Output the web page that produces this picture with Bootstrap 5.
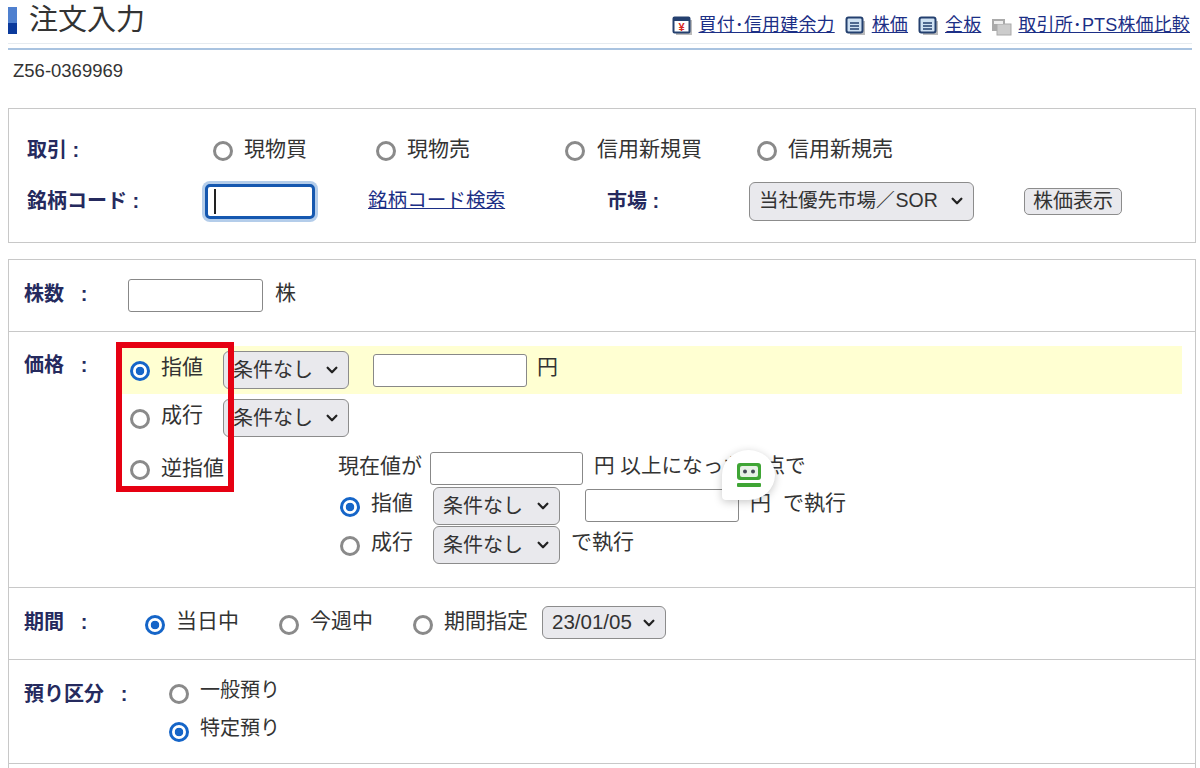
<!DOCTYPE html>
<html lang="ja">
<head>
<meta charset="utf-8">
<title>注文入力</title>
<link href="https://cdn.jsdelivr.net/npm/bootstrap@5.3.0/dist/css/bootstrap.min.css" rel="stylesheet">
<style>
html,body{height:768px;overflow:hidden}
body{font-family:"Liberation Sans","Noto Sans CJK JP",sans-serif;font-size:21px;color:#333;background:#fff;position:relative}
.page-wrap{padding:0 8px;position:relative;height:768px}
.head-row{height:42px;padding-top:1px}
.title-bar{width:9px;height:27px;margin-top:6px;background:linear-gradient(#4f80cf 0 58%,#0b3a9c 58%)}
.title-txt{font-size:29px;line-height:38px;margin-left:12px;color:#333}
.top-links{gap:10px;font-size:18px;padding-right:2px;padding-top:11px}
.top-links a,.code-link{color:#1c2f86;text-decoration:underline}
.top-links a{letter-spacing:.15px}
.top-links span{display:flex;align-items:center;gap:5px}
.rule{height:7px;border-top:1px solid #e6ebf0;border-bottom:2px solid #a9c3e0;width:1184px;margin-top:1px}
.acct{font-size:18.5px;padding-left:5px;margin-top:13px;line-height:16px;color:#333;height:45px}
.box{border:1px solid #c8c8c8;width:1188px}
.box-top{height:135px;padding:22px 0 0 18px;margin-bottom:16px}
.lbl{font-size:20px;font-weight:700;color:#252a5e;white-space:nowrap}
.rad.form-check-input{appearance:none;width:20px;height:20px;margin:0;flex:none;position:relative;top:1px;border:3px solid #8a8a8a;border-radius:50%;background:#fff;box-shadow:none}
.rad.form-check-input:checked[type=radio]{border-color:#1565c8;background:#fff;background-image:radial-gradient(circle,#1565c8 0 4px,#fff 4.6px)}
.txt{margin-bottom:6px;white-space:nowrap;line-height:26px}
.txt-flat{margin-bottom:2px}
.txt-sm{font-size:20px}
.txt-mid{font-size:20.6px}
.fld.form-control{border:1px solid #888;border-radius:3px;height:33px;padding:0 6px;min-height:0;background:#fff;box-shadow:none}
.sel.form-select{height:38px;padding:0 26px 0 9px;font-size:20px;line-height:1;color:#333;background-color:#e9e9ed;border:1.5px solid #8c8c8c;border-radius:6px;background-image:url("data:image/svg+xml,%3csvg xmlns='http://www.w3.org/2000/svg' viewBox='0 0 16 16'%3e%3cpath fill='none' stroke='%23222' stroke-linecap='round' stroke-linejoin='round' stroke-width='2.6' d='m3 5.5 5 5 5-5'/%3e%3c/svg%3e");background-position:right 9px center;background-size:14px 14px;width:126px}
.w-trade1{width:186px}
.opt-a{width:163px;gap:11px}
.opt-b{width:189px;gap:11px}
.opt-c{width:192px;gap:12px}
.opt-d{gap:11px}
.row-a{height:38px}
.row-b{height:40px;margin-top:12px}
.w-trade2{width:178px}
.focus-code.form-control{width:110px;height:35px;border:3px solid #1558b0;border-radius:5px;box-shadow:0 0 0 3px #b4cdea;background:linear-gradient(#222,#222) 6px 50%/2px 25px no-repeat #fff;padding:0}
.code-link{margin-left:53px;width:239px;font-size:19.6px}
.mkt-lab{width:142px}
.sel.mkt-sel{width:225px;height:39px;font-size:19.5px}
.stock-btn.btn{font-size:20px;line-height:1;height:27px;width:98px;padding:0;margin-left:50px;border:1.5px solid #8c8c8c;border-radius:5px;background:#e9e9ed;color:#333}
.sect{border-bottom:1px solid #c8c8c8;padding-left:15px}
.sect:last-child{border-bottom:0}
.s-qty{height:72px}
.s-price{height:256px;padding-top:14px}
.s-term{height:72px}
.s-acct{height:104px;padding-top:14px}
.s-rest{height:40px}
.qty-lab{width:104px;margin-bottom:3px}
.qty-in.fld{width:135px}
.ms-12{margin-left:12px}
.ms-10{margin-left:10px}
.ms-11{margin-left:11px}
.ms-8x{margin-left:8px}
.lab-w{width:96px;line-height:38px}
.band{height:48px;width:1062px;background:#ffffd2}
.plain-row{height:48px}
.radcell{width:103px;padding-left:10px;gap:11px}
.trigger{margin-top:8px}
.trig-left{width:218px;padding-left:10px;gap:11px;height:37px}
.ln-1{height:37px}
.ln-2{height:38px}
.ln-3{height:39px}
.in-154.fld{width:154px;margin-left:24px}
.in-153.fld{width:153px}
.sub-rad{width:95px;gap:11px;padding-left:2px}
.sel.sel-127{width:127px}
.in-25.fld{margin-left:25px;margin-top:-1px;margin-bottom:1px}
.term-lab{width:121px;margin-bottom:3px}
.term-opt{width:134px;gap:11px}
.sel.term-sel{width:124px;height:33px;margin-left:14px;font-size:20.5px;margin-bottom:2px}
.acct-lab{width:145px;line-height:40px}
.acct-row{height:38px;gap:11px}
.redbox{position:absolute;left:116px;top:342px;width:118px;height:150px;border:6px solid #e60012;pointer-events:none}
.bot-chip{position:absolute;left:722px;top:450px;width:53px;height:50px;background:#fff;border-radius:50% 50% 50% 4px;box-shadow:0 2px 8px rgba(0,0,0,.22);display:flex;align-items:center;justify-content:center}
</style>
</head>
<body>
<div class="page-wrap">
  <div class="head-row d-flex justify-content-between">
    <div class="d-flex align-items-start"><div class="title-bar"></div><div class="title-txt">注文入力</div></div>
    <div class="top-links d-flex align-items-start">
      <span><svg width="22" height="20" viewBox="0 0 22 20"><rect x="4" y="4" width="16" height="15" fill="#bbb"/><rect x="1.5" y="1.5" width="16" height="15" rx="1" fill="#fff" stroke="#24406f" stroke-width="2"/><rect x="1" y="1" width="17" height="4" fill="#24406f"/><text x="9.5" y="15" font-size="11" font-weight="700" fill="#d8261c" text-anchor="middle" font-family="Liberation Sans">¥</text></svg><a href="#">買付･信用建余力</a></span>
      <span><svg width="22" height="20" viewBox="0 0 22 20"><rect x="5" y="5" width="15" height="14" fill="#bbb"/><rect x="1.5" y="1.5" width="16" height="15" rx="2" fill="#cfe1f2" stroke="#24406f" stroke-width="2"/><path d="M5 7h9M5 10h9M5 13h9" stroke="#24406f" stroke-width="1.3"/></svg><a href="#">株価</a></span>
      <span><svg width="22" height="20" viewBox="0 0 22 20"><rect x="5" y="5" width="15" height="14" fill="#bbb"/><rect x="1.5" y="1.5" width="16" height="15" rx="2" fill="#cfe1f2" stroke="#24406f" stroke-width="2"/><path d="M5 7h9M5 10h9M5 13h9" stroke="#24406f" stroke-width="1.3"/></svg><a href="#">全板</a></span>
      <span><svg width="22" height="20" viewBox="0 0 22 20"><rect x="1" y="3" width="13" height="12" fill="#aaa"/><rect x="6" y="8" width="14" height="11" fill="#ccc" stroke="#aaa"/><rect x="3" y="5" width="9" height="3" fill="#eee"/></svg><a href="#">取引所･PTS株価比較</a></span>
    </div>
  </div>
  <div class="rule"></div>
  <div class="acct">Z56-0369969</div>

  <div class="box box-top">
    <div class="d-flex align-items-center row-a">
      <div class="lbl w-trade1">取引 :</div>
      <div class="d-flex align-items-center opt-a"><input class="form-check-input rad" type="radio" name="t"><span class="txt txt-flat">現物買</span></div>
      <div class="d-flex align-items-center opt-b"><input class="form-check-input rad" type="radio" name="t"><span class="txt txt-flat">現物売</span></div>
      <div class="d-flex align-items-center opt-c"><input class="form-check-input rad" type="radio" name="t"><span class="txt txt-flat">信用新規買</span></div>
      <div class="d-flex align-items-center opt-d"><input class="form-check-input rad" type="radio" name="t"><span class="txt txt-flat">信用新規売</span></div>
    </div>
    <div class="d-flex align-items-center row-b">
      <div class="lbl w-trade2">銘柄コード :</div>
      <input class="form-control focus-code" type="text">
      <a class="code-link" href="#">銘柄コード検索</a>
      <div class="lbl mkt-lab">市場 :</div>
      <select class="form-select sel mkt-sel"><option>当社優先市場／SOR</option></select>
      <button class="btn stock-btn" type="button">株価表示</button>
    </div>
  </div>

  <div class="box">
    <div class="sect s-qty d-flex align-items-center">
      <div class="lbl qty-lab">株数&nbsp;&nbsp;&nbsp;:</div>
      <input class="form-control fld qty-in" type="text">
      <span class="txt ms-12">株</span>
    </div>
    <div class="sect s-price">
      <div class="d-flex">
        <div class="lbl lab-w">価格&nbsp;&nbsp;&nbsp;:</div>
        <div>
          <div class="band d-flex align-items-center">
            <div class="radcell d-flex align-items-center"><input class="form-check-input rad" type="radio" name="p" checked><span class="txt">指値</span></div>
            <select class="form-select sel"><option>条件なし</option></select>
            <input class="form-control fld in-154" type="text">
            <span class="txt ms-10">円</span>
          </div>
          <div class="plain-row d-flex align-items-center">
            <div class="radcell d-flex align-items-center"><input class="form-check-input rad" type="radio" name="p"><span class="txt">成行</span></div>
            <select class="form-select sel"><option>条件なし</option></select>
          </div>
          <div class="trigger d-flex">
            <div class="trig-left d-flex align-items-center"><input class="form-check-input rad" type="radio" name="p"><span class="txt txt-flat">逆指値</span></div>
            <div>
              <div class="ln-1 d-flex align-items-center">
                <span class="txt">現在値が</span>
                <input class="form-control fld in-153 ms-8x" type="text">
                <span class="txt txt-mid ms-11">円 以上になった時点で</span>
              </div>
              <div class="ln-2 d-flex align-items-center">
                <div class="d-flex align-items-center sub-rad"><input class="form-check-input rad" type="radio" name="q" checked><span class="txt">指値</span></div>
                <select class="form-select sel sel-127"><option>条件なし</option></select>
                <input class="form-control fld in-154 in-25" type="text">
                <span class="txt ms-11">円</span>
                <span class="txt ms-12">で執行</span>
              </div>
              <div class="ln-3 d-flex align-items-center">
                <div class="d-flex align-items-center sub-rad"><input class="form-check-input rad" type="radio" name="q"><span class="txt">成行</span></div>
                <select class="form-select sel sel-127"><option>条件なし</option></select>
                <span class="txt ms-11">で執行</span>
              </div>
            </div>
          </div>
        </div>
      </div>
    </div>
    <div class="sect s-term d-flex align-items-center">
      <div class="lbl term-lab">期間&nbsp;&nbsp;&nbsp;:</div>
      <div class="d-flex align-items-center term-opt"><input class="form-check-input rad" type="radio" name="k" checked><span class="txt">当日中</span></div>
      <div class="d-flex align-items-center term-opt"><input class="form-check-input rad" type="radio" name="k"><span class="txt">今週中</span></div>
      <div class="d-flex align-items-center opt-d"><input class="form-check-input rad" type="radio" name="k"><span class="txt">期間指定</span></div>
      <select class="form-select sel term-sel"><option>23/01/05</option></select>
    </div>
    <div class="sect s-acct d-flex">
      <div class="lbl acct-lab">預り区分&nbsp;&nbsp;&nbsp;:</div>
      <div>
        <div class="d-flex align-items-center acct-row"><input class="form-check-input rad" type="radio" name="a"><span class="txt txt-sm">一般預り</span></div>
        <div class="d-flex align-items-center acct-row"><input class="form-check-input rad" type="radio" name="a" checked><span class="txt txt-sm">特定預り</span></div>
      </div>
    </div>
    <div class="sect s-rest"></div>
  </div>
</div>
<div class="redbox"></div>
<div class="bot-chip"><svg width="28" height="26" viewBox="0 0 28 26"><rect x="2" y="1" width="24" height="17" rx="3" fill="#3fa535"/><rect x="5" y="4" width="18" height="11" rx="2" fill="#e7f1e6"/><circle cx="10" cy="9.5" r="2" fill="#444a55"/><circle cx="18" cy="9.5" r="2" fill="#444a55"/><rect x="2" y="21" width="24" height="4" rx="1" fill="#3fa535"/></svg></div>
<script src="https://cdn.jsdelivr.net/npm/bootstrap@5.3.0/dist/js/bootstrap.bundle.min.js"></script>
</body>
</html>
